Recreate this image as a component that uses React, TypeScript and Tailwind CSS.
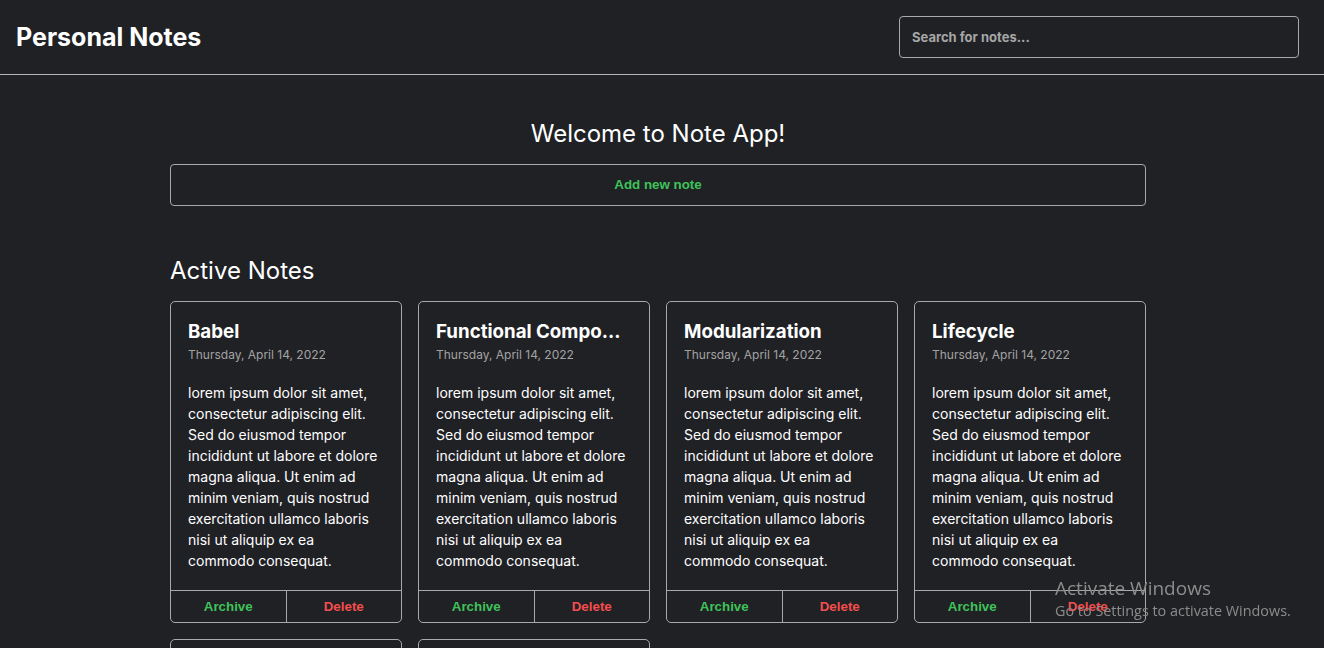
import React from "react";

const body =
  "lorem ipsum dolor sit amet, consectetur adipiscing elit. Sed do eiusmod tempor incididunt ut labore et dolore magna aliqua. Ut enim ad minim veniam, quis nostrud exercitation ullamco laboris nisi ut aliquip ex ea commodo consequat.";

const notes = [
  { title: "Babel" },
  { title: "Functional Component" },
  { title: "Modularization" },
  { title: "Lifecycle" },
  { title: "ESM" },
  { title: "Module Bundler" },
];

const btnFont = "[font-family:'Liberation_Sans',Arial,sans-serif]";

function NoteCard({ title }: { title: string }) {
  return (
    <div className="flex flex-col rounded-[5px] border border-[#a9a9a9] bg-[#202125]">
      <div className="pt-4 pb-[19px] pl-[17px] pr-[22px]">
        <h3 className="truncate text-[18.72px] leading-[28px] font-bold text-white">{title}</h3>
        <p className="mt-px text-[12px] leading-[16px] text-[#a3a3a3]">Thursday, April 14, 2022</p>
        <p className="mt-[19px] text-[14px] leading-[21px] text-white">{body}</p>
      </div>
      <div className="flex h-[32px] border-t border-[#a9a9a9]">
        <button className={`flex-1 text-[13.333px] font-bold text-[#3fc25a] ${btnFont}`}>Archive</button>
        <button className={`flex-1 border-l border-[#a9a9a9] text-[13.333px] font-bold text-[#f34d4d] ${btnFont}`}>
          Delete
        </button>
      </div>
    </div>
  );
}

export default function App() {
  return (
    <div className="min-h-screen bg-[#202125] text-white [font-family:Inter,'Noto_Sans',sans-serif]">
      <header className="flex h-[75px] items-center justify-between border-b border-[#b5b5b5] pl-4 pr-[25px]">
        <h1 className="text-[25px] leading-none font-bold">Personal Notes</h1>
        <input
          placeholder="Search for notes..."
          className="h-[42px] w-[400px] rounded-[4px] border border-[#a9a9a9] bg-[#202125] px-3 text-[13px] font-bold text-white placeholder:text-[#a6a6a6] outline-none"
        />
      </header>
      <main className="ml-[170px] w-[976px] pt-[43px]">
        <h2 className="text-center text-[24px] leading-[32px]">Welcome to Note App!</h2>
        <button
          className={`mt-[14px] h-[42px] w-full rounded-[4px] border border-[#a9a9a9] text-[13.333px] font-bold text-[#3fc25a] ${btnFont}`}
        >
          Add new note
        </button>
        <h2 className="mt-[49px] text-[24px] leading-[32px]">Active Notes</h2>
        <div className="mt-[14px] grid grid-cols-4 gap-4">
          {notes.map((n) => (
            <NoteCard key={n.title} title={n.title} />
          ))}
        </div>
      </main>
      <div className="pointer-events-none fixed left-[1055px] top-[576px] text-[#8c8c8c] [font-family:'Open_Sans','Noto_Sans',sans-serif]">
        <div className="text-[19px] leading-[24px]">Activate Windows</div>
        <div className="mt-px text-[14.4px] leading-[20px]">Go to Settings to activate Windows.</div>
      </div>
    </div>
  );
}
